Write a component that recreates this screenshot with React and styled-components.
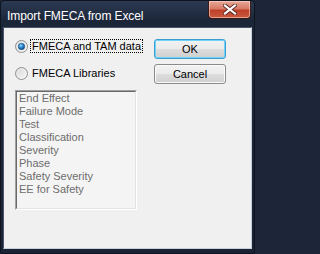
import React from "react";
import styled, { createGlobalStyle } from "styled-components";

const Global = createGlobalStyle`
  html, body { margin: 0; padding: 0; background: #1d2638; }
  body { font-family: "Liberation Sans", Arial, sans-serif; }
`;

const Window = styled.div`
  width: 255px;
  height: 254px;
  box-sizing: border-box;
  display: flex;
  flex-direction: column;
  background: linear-gradient(#2b3a52 0px, #1c2639 20px, #1a2335 100%);
  border: 1px solid #0e1420;
  border-radius: 4px 4px 0 0;
`;

const TitleBar = styled.div`
  height: 26px;
  display: flex;
  align-items: flex-start;
  justify-content: space-between;
  padding: 0 3px 0 6px;
  flex: none;
`;

const Title = styled.div`
  color: #ffffff;
  font-size: 12px;
  line-height: 14px;
  margin-top: 8px;
  letter-spacing: -0.1px;
`;

const CloseButton = styled.div`
  width: 43px;
  height: 18px;
  box-sizing: border-box;
  margin-top: 0px;
  border: 1px solid #3b1a14;
  border-top: none;
  border-radius: 0 0 4px 4px;
  background: linear-gradient(#e8a999 0%, #d77a66 45%, #c0412a 55%, #c85a40 100%);
  box-shadow: inset 0 0 0 1px rgba(255, 220, 210, 0.55);
  display: flex;
  align-items: center;
  justify-content: center;
`;

const Client = styled.div`
  flex: 1;
  margin: 0 2px 4px 2px;
  background: #f0f0f0;
  border: 1px solid #6f7d94;
  border-color: #4a566a #c9d0da #c9d0da #4a566a;
  display: flex;
`;

const LeftCol = styled.div`
  padding: 11px 0 0 11px;
  display: flex;
  flex-direction: column;
`;

const RadioRow = styled.div`
  height: 14px;
  display: flex;
  align-items: center;
  margin-bottom: ${(p) => p.$gap || 0}px;
`;

const Label = styled.span`
  margin-left: 2px;
  height: 14px;
  box-sizing: border-box;
  padding: 0 1px 0 1px;
  display: flex;
  align-items: center;
  font-size: 11px;
  color: #000;
  border: 1px dotted ${(p) => (p.$focus ? "#000" : "transparent")};
  white-space: nowrap;
`;

const ListBox = styled.div`
  margin-top: 10px;
  width: 122px;
  height: 120px;
  box-sizing: border-box;
  border-style: solid;
  border-width: 1px;
  border-color: #a0a0a0 #ffffff #ffffff #a0a0a0;
  background: #f4f4f4;
`;

const ListInner = styled.div`
  height: 100%;
  box-sizing: border-box;
  border-style: solid;
  border-width: 1px;
  border-color: #696969 #e3e3e3 #e3e3e3 #696969;
  padding: 0 0 0 2px;
`;

const ListItem = styled.div`
  height: 13px;
  line-height: 13px;
  font-size: 11px;
  color: #6d6d6d;
  white-space: nowrap;
`;

const ButtonCol = styled.div`
  margin-left: auto;
  margin-right: 25px;
  padding-top: 11px;
  display: flex;
  flex-direction: column;
  gap: 5px;
`;

const Button = styled.div`
  width: 72px;
  height: 20px;
  box-sizing: border-box;
  border: 1px solid ${(p) => (p.$default ? "#3c9fd0" : "#8a8a8a")};
  border-radius: 3px;
  background: linear-gradient(#f2f2f2 0%, #ebebeb 48%, #dddddd 52%, #cfcfcf 100%);
  box-shadow: inset 0 0 0 1px ${(p) => (p.$default ? "#6fd3fb" : "#fbfbfb")};
  display: flex;
  align-items: center;
  justify-content: center;
  font-size: 11px;
  color: #000;
`;

const Radio = ({ checked }) => (
  <svg width="13" height="13" viewBox="0 0 13 13">
    <defs>
      <linearGradient id={checked ? "rbgC" : "rbg"} x1="0" y1="0" x2="1" y2="1">
        <stop offset="0" stopColor="#d4d4d4" />
        <stop offset="1" stopColor="#fafafa" />
      </linearGradient>
      <radialGradient id="dot" cx="0.4" cy="0.35" r="0.7">
        <stop offset="0" stopColor="#a8dcfb" />
        <stop offset="0.45" stopColor="#2a8bd6" />
        <stop offset="1" stopColor="#0b3e80" />
      </radialGradient>
    </defs>
    <circle cx="6.5" cy="6.5" r="6" fill={`url(#${checked ? "rbgC" : "rbg"})`} stroke="#8e8f8f" strokeWidth="1" />
    <circle cx="6.5" cy="6.5" r="4.5" fill="none" stroke="#f4f4f4" strokeWidth="1" opacity="0.7" />
    {checked && <circle cx="6.5" cy="6.5" r="3.2" fill="url(#dot)" stroke="#1a4d7a" strokeWidth="0.6" />}
  </svg>
);

const CloseX = () => (
  <svg width="14" height="11" viewBox="0 0 14 11">
    <path d="M2 1.5 L12 9.5 M12 1.5 L2 9.5" stroke="#5a2a22" strokeWidth="4" strokeLinecap="square" />
    <path d="M2 1.5 L12 9.5 M12 1.5 L2 9.5" stroke="#ffffff" strokeWidth="2.2" strokeLinecap="square" />
  </svg>
);

const items = [
  "End Effect",
  "Failure Mode",
  "Test",
  "Classification",
  "Severity",
  "Phase",
  "Safety Severity",
  "EE for Safety",
];

export default function App() {
  return (
    <>
      <Global />
      <Window>
        <TitleBar>
          <Title>Import FMECA from Excel</Title>
          <CloseButton>
            <CloseX />
          </CloseButton>
        </TitleBar>
        <Client>
          <LeftCol>
            <RadioRow $gap={13}>
              <Radio checked />
              <Label $focus>FMECA and TAM data</Label>
            </RadioRow>
            <RadioRow>
              <Radio />
              <Label>FMECA Libraries</Label>
            </RadioRow>
            <ListBox>
              <ListInner>
                {items.map((t) => (
                  <ListItem key={t}>{t}</ListItem>
                ))}
              </ListInner>
            </ListBox>
          </LeftCol>
          <ButtonCol>
            <Button $default>OK</Button>
            <Button>Cancel</Button>
          </ButtonCol>
        </Client>
      </Window>
    </>
  );
}
